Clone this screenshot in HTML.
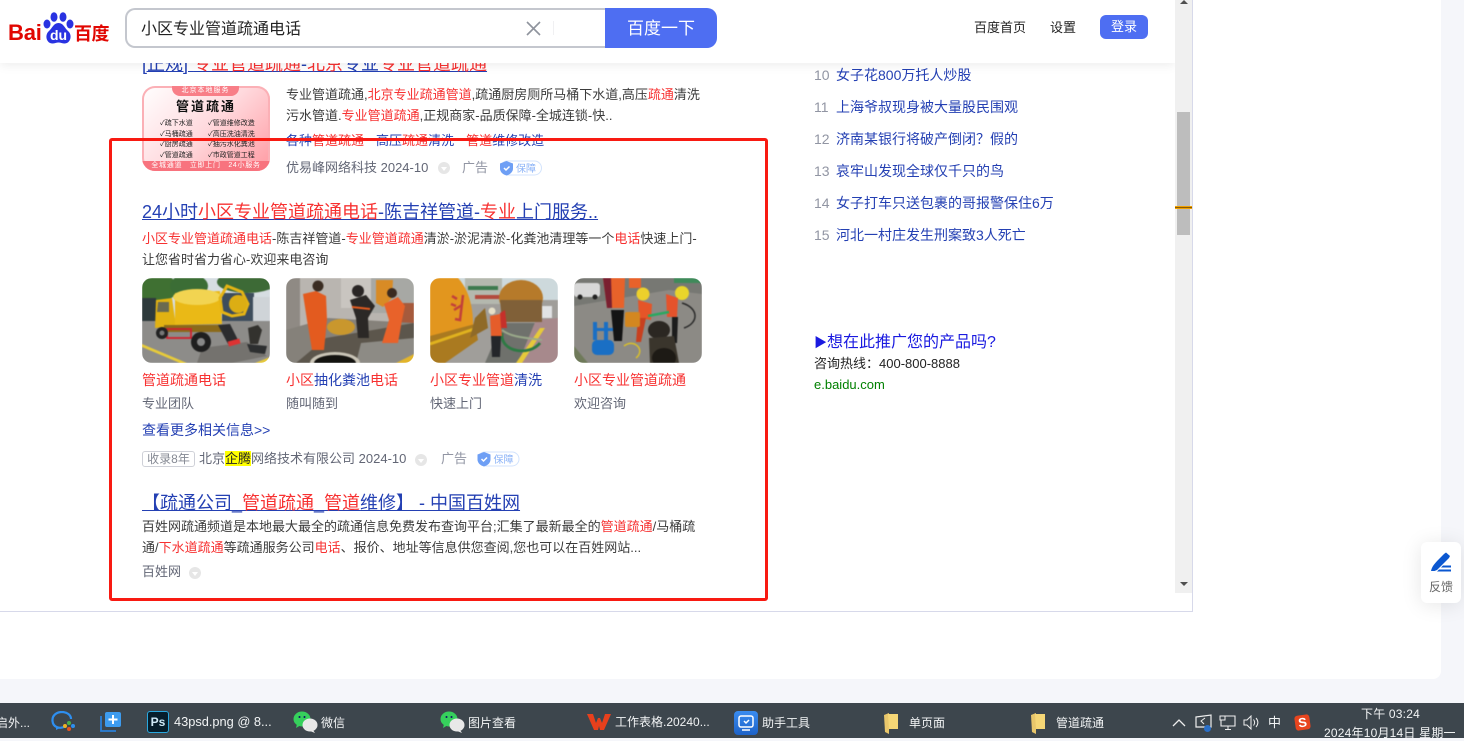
<!DOCTYPE html>
<html lang="zh"><head><meta charset="utf-8"><title>小区专业管道疏通电话</title>
<style>
html,body{margin:0;padding:0}
body{width:1464px;height:738px;overflow:hidden;position:relative;background:#f5f6fa;font-family:"Liberation Sans","Noto Sans CJK SC",sans-serif;color:#333}
.a{position:absolute}
.t{position:absolute;white-space:nowrap;line-height:20px}
.r{color:#f73131}
.b{color:#2440b3}
.d{font-size:13px;color:#3b3b3b}
.g{font-size:13px;color:#626675}
.u{text-decoration:underline}
.ti{font-size:18px;color:#2440b3;line-height:24px}
.tb{font-size:12px;color:#f2f4f5;line-height:16px;position:absolute;white-space:nowrap}
.ph{position:absolute;width:128px;height:85px;border-radius:10px;overflow:hidden;top:278px}
.ph svg{display:block;filter:blur(.45px)}
.sp{display:inline-block;width:12px}
</style></head><body>
<div class="a" style="left:0;top:0;width:1441px;height:679px;background:#fff;border-bottom-right-radius:8px"></div>

<!-- iframe content -->
<div class="a" style="left:0;top:0;width:1192px;height:611px;border-right:1px solid #d7d9ea;border-bottom:1px solid #d7d9ea;background:#fff;overflow:hidden">

<div class="t ti u" style="left:142px;top:52px"><span class="b">[正规]</span> <span class="r">专业管道疏通</span><span class="b">-</span><span class="r">北京</span><span class="b">专业</span><span class="r">专业管道疏通</span></div>

<!-- first ad thumb -->
<div class="a" style="left:142px;top:86px;width:128px;height:85px;border-radius:13px;overflow:hidden;background:linear-gradient(135deg,#fff 0%,#ffd9dd 50%,#ff9aa2 100%);box-shadow:inset 0 0 0 2px #fbb0b6">
 <div class="a" style="left:30px;top:0;width:67px;height:10px;background:#f87e87;border-radius:0 0 8px 8px;color:#fff;font-size:7px;line-height:9px;text-align:center;letter-spacing:1px;white-space:nowrap">北京本地服务</div>
 <div class="a" style="left:0;top:11px;width:128px;text-align:center;font-size:13px;line-height:20px;color:#111;letter-spacing:2px;font-weight:bold;white-space:nowrap">管道疏通</div>
 <div class="a" style="left:18px;top:33px;font-size:7px;line-height:10.700px;color:#222;white-space:nowrap">✓疏下水道<br>✓马桶疏通<br>✓厨房疏通<br>✓管道疏通</div>
 <div class="a" style="left:66px;top:33px;font-size:7px;line-height:10.700px;color:#222;white-space:nowrap">✓管道维修改造<br>✓高压洗油清洗<br>✓抽污水化粪池<br>✓市政管道工程</div>
 <div class="a" style="left:0;top:75px;width:128px;height:10px;background:#f8737e;color:#fff;font-size:7px;line-height:10px;text-align:center;white-space:nowrap;letter-spacing:.7px">全城通道　立即上门　24小服务</div>
</div>

<div class="t d" style="left:286px;top:85px">专业管道疏通,<span class="r">北京专业疏通管道</span>,疏通厨房厕所马桶下水道,高压<span class="r">疏通</span>清洗</div>
<div class="t d" style="left:286px;top:106px">污水管道.<span class="r">专业管道疏通</span>,正规商家-品质保障-全城连锁-快..</div>
<div class="t b" style="left:286px;top:131px;font-size:13px">各种<span class="r">管道疏通</span><span class="sp"></span>高压<span class="r">疏通</span>清洗<span class="sp"></span><span class="r">管道</span>维修改造</div>
<div class="t g" style="left:286px;top:158px">优易峰网络科技 2024-10</div>
<div class="a" style="left:438px;top:162px;width:12px;height:12px;border-radius:50%;background:#e6e6e6"><div class="a" style="left:3px;top:5px;border-left:3px solid transparent;border-right:3px solid transparent;border-top:4px solid #fff"></div></div>
<div class="t" style="left:462px;top:158px;font-size:13px;color:#9195a3">广告</div>
<svg class="a" style="left:500px;top:160px" width="42" height="16" viewBox="0 0 42 16"><rect x=".5" y="1" width="41" height="14" rx="7" fill="#fff" stroke="#d3e3fc"/><path d="M0 3.500 6.500 1l6.500 2.500v5C13 12 10 14.500 6.500 15.500 3 14.500 0 12 0 8.500z" fill="#6e9ff5"/><path d="M4 8l2 2 3.500-3.500" fill="none" stroke="#fff" stroke-width="1.500"/><text x="16" y="12" font-size="10" fill="#8ab2f7" font-family="Liberation Sans,Noto Sans CJK SC,sans-serif">保障</text></svg>

<!-- second result -->
<div class="t ti u" style="left:142px;top:200px"><span class="b">24小时</span><span class="r">小区专业管道疏通电话</span><span class="b">-陈吉祥管道-</span><span class="r">专业</span><span class="b">上门服务..</span></div>
<div class="t d" style="left:142px;top:229px"><span class="r">小区专业管道疏通电话</span>-陈吉祥管道-<span class="r">专业管道疏通</span>清淤-淤泥清淤-化粪池清理等一个<span class="r">电话</span>快速上门-</div>
<div class="t d" style="left:142px;top:250px">让您省时省力省心-欢迎来电咨询</div>

<div class="ph" style="left:142px"><svg width="128" height="85" viewBox="0 0 128 85">
<rect width="128" height="85" fill="#8f8f8c"/>
<rect width="128" height="44" fill="#d6dde2"/>
<ellipse cx="14" cy="10" rx="22" ry="14" fill="#3f7032"/><ellipse cx="47" cy="8" rx="19" ry="12" fill="#3b6d35"/><ellipse cx="105" cy="4" rx="30" ry="11" fill="#3d6a36"/>
<rect x="0" y="20" width="14" height="24" fill="#2e3a3c"/>
<rect x="80" y="15" width="32" height="32" fill="#3d4d5c"/><rect x="111" y="19" width="17" height="42" fill="#cfd4d8"/>
<rect y="43" width="128" height="42" fill="#8d8c89"/><path d="M0 66 45 85H38L0 69z" fill="#e7cb3a"/><path d="M60 70 105 64 125 78 90 85H55z" fill="#74726e"/>
<path d="M14 22 30 20 34 48 13 50z" fill="#e2b212"/><path d="M16 24H27V34H15z" fill="#6b6a50"/>
<path d="M33 15 78 13 80 46 33 47z" fill="#eab916"/><ellipse cx="55" cy="19" rx="24" ry="8" fill="#f2d451"/>
<path d="M78 20 85 8 100 14 106 26 102 36 90 38 80 34z" fill="none" stroke="#e5b414" stroke-width="3"/><circle cx="96" cy="26" r="9" fill="#dcae14"/>
<path d="M22 47H88V54H22z" fill="#8b6a1a"/><rect x="25" y="51" width="24" height="9" fill="none" stroke="#d0202e" stroke-width="1.800"/>
<circle cx="20" cy="55" r="6" fill="#222"/><circle cx="20" cy="55" r="2.500" fill="#777"/><circle cx="59" cy="64" r="10" fill="#1f1f1f"/><circle cx="59" cy="64" r="4" fill="#888"/>
<path d="M76 47 88 46 96 62 86 66z" fill="#2b2c2e"/><rect x="86" y="62" width="12" height="5" fill="#d33" transform="rotate(-15 92 64)"/>
<path d="M106 50 116 47 120 52 116 66H108z" fill="#33322e"/><path d="M105 66 125 68 123 76 108 74z" fill="#2d2f30"/>
<path d="M113 85 128 79V85z" fill="#e6c93c"/></svg></div>

<div class="ph" style="left:286px"><svg width="128" height="85" viewBox="0 0 128 85">
<rect width="128" height="85" fill="#a8a6a2"/>
<rect width="128" height="50" fill="#b9b5b0"/><path d="M0 0H14V50L0 55z" fill="#8f8a84"/><path d="M55 0 85 0 85 30 55 30z" fill="#c9c5c0"/><rect x="85" y="0" width="43" height="35" fill="#a7a8a4"/>
<path d="M90 2H107L106 20 97 29 90 25z" fill="#d88b25"/><rect x="112" y="25" width="16" height="20" fill="#a65a3c"/>
<path d="M0 52 42 40 128 45V85H0z" fill="#85817a"/><path d="M40 60 128 45V85H10z" fill="#5c564c"/><path d="M75 65 128 60V85H70z" fill="#8d8b85"/>
<ellipse cx="55" cy="49" rx="14" ry="8" fill="#c9972d"/>
<path d="M17 16 30 13 40 18 41 42 38 72H26L21 42z" fill="#e35b1f"/><circle cx="32" cy="8" r="5.500" fill="#3a2c22"/>
<path d="M64 22 80 17 89 28 82 40 83 60H72L70 40z" fill="#2b2826"/><circle cx="72" cy="13" r="6" fill="#2a2625"/><path d="M66 29 84 31" stroke="#e35b1f" stroke-width="2"/>
<path d="M98 26 112 19 119 28 116 42 112 65H96L103 42z" fill="#e8622a"/><circle cx="106" cy="15" r="5" fill="#3b2a20"/>
<ellipse cx="49" cy="85" rx="25" ry="11" fill="#c9c4b6"/><ellipse cx="49" cy="85" rx="21" ry="8" fill="#141310"/>
<path d="M110 85 128 76V85z" fill="#e3b52b"/></svg></div>

<div class="ph" style="left:430px"><svg width="128" height="85" viewBox="0 0 128 85">
<rect width="128" height="85" fill="#a09e9a"/>
<rect width="128" height="22" fill="#cdd9dc"/><rect x="35" y="0" width="37" height="26" fill="#b4b8ae"/><rect x="38" y="8" width="30" height="4" fill="#3d7a4e"/><rect x="45" y="17" width="25" height="4" fill="#b34a3e"/>
<path d="M72 45H106L88 85H55z" fill="#6f716c"/><path d="M106 42 128 40V85H88z" fill="#a7898c"/><path d="M110 50 115 50 92 85H86z" fill="#e6c93a"/>
<ellipse cx="91" cy="20" rx="22" ry="18" fill="#b67a2a"/><path d="M70 22H112V44H72z" fill="#806038"/><rect x="112" y="28" width="10" height="12" fill="#e0e2e4"/>
<path d="M0 0H28C42 15 45 40 42 62L0 72z" fill="#e2961e"/>
<path d="M22 18l5 3M21 26l5 2M33 17l-3 25-5-1M24 32l8-5" stroke="#c2403a" stroke-width="2.500" fill="none"/>
<path d="M0 58 45 46 48 62 15 85H0z" fill="#aa7a20"/><path d="M0 66 47 50" stroke="#e0b21e" stroke-width="3"/><path d="M45 40 55 30 58 50 40 60z" fill="#8f6a28"/>
<path d="M72 55C70 75 100 78 110 65" fill="none" stroke="#2d7a43" stroke-width="2.800"/><path d="M72 52C82 60 100 60 112 62" fill="none" stroke="#9aa98a" stroke-width="2"/>
<path d="M60 38 70 36 72 58H61z" fill="#e55d2a"/><path d="M61 58H71L70 79H62z" fill="#24262a"/><circle cx="62" cy="33" r="3.500" fill="#e6e0c8"/><path d="M70 35 75 32 77 50 71 50z" fill="#c6302a"/>
</svg></div>

<div class="ph" style="left:574px"><svg width="128" height="85" viewBox="0 0 128 85">
<rect width="128" height="85" fill="#8c8a85"/>
<path d="M0 0H128V16L95 12 0 28z" fill="#777873"/><rect x="100" y="0" width="28" height="5" fill="#3f8a5a"/>
<rect x="0" y="5" width="26" height="14" rx="3" fill="#d8d8d8"/><circle cx="6" cy="19" r="2.500" fill="#222"/><circle cx="21" cy="19" r="2.500" fill="#222"/>
<path d="M29 0H51L50 30H33z" fill="#e8622a"/><path d="M29 0H37L38 30H33z" fill="#7a1f30"/><path d="M37 32H50L48 63H40z" fill="#141414"/>
<rect x="55" y="0" width="12" height="10" fill="#e8622a"/>
<circle cx="69" cy="16" r="6.500" fill="#ecd02c"/><path d="M64 22 78 26 77 42 65 40z" fill="#e55528"/><path d="M64 40H72L67 64H62z" fill="#c8401f"/>
<circle cx="108" cy="15" r="7" fill="#e9d52b"/><path d="M92 16 104 20 103 39 93 39z" fill="#e5532c"/><path d="M98 39H104L103 65H98z" fill="#1c1c1c"/>
<path d="M74 38 95 34" stroke="#2aa860" stroke-width="2.500"/>
<rect x="19" y="44" width="4" height="18" fill="#1a6fc4"/><rect x="30" y="44" width="4" height="18" fill="#1a6fc4"/><rect x="20" y="50" width="19" height="3" fill="#1a6fc4"/><rect x="18" y="62" width="22" height="15" rx="5" fill="#1a6fc4"/>
<rect x="51" y="34" width="15" height="15" rx="2" fill="#d38720"/><path d="M50 68C60 60 72 72 62 80" fill="none" stroke="#d9bf2a" stroke-width="1.500"/>
<ellipse cx="85" cy="52" rx="11" ry="9" fill="#2b2722"/>
<path d="M75 60 100 58 105 85H76z" fill="#3a352c"/><ellipse cx="90" cy="80" rx="12" ry="10" fill="#1d1a15"/>
<path d="M108 25C125 30 125 45 110 50" fill="none" stroke="#2a2a2a" stroke-width="1.500"/>
<path d="M0 68 14 85H0z" fill="#6f7a5a"/></svg></div>

<div class="t" style="left:142px;top:370px;font-size:14px;color:#f73131">管道疏通电话</div>
<div class="t g" style="left:142px;top:394px">专业团队</div>
<div class="t" style="left:286px;top:370px;font-size:14px"><span class="r">小区</span><span class="b">抽化粪池</span><span class="r">电话</span></div>
<div class="t g" style="left:286px;top:394px">随叫随到</div>
<div class="t" style="left:430px;top:370px;font-size:14px"><span class="r">小区专业管道</span><span class="b">清洗</span></div>
<div class="t g" style="left:430px;top:394px">快速上门</div>
<div class="t" style="left:574px;top:370px;font-size:14px"><span class="r">小区专业管道疏通</span></div>
<div class="t g" style="left:574px;top:394px">欢迎咨询</div>

<div class="t b" style="left:142px;top:420px;font-size:14px">查看更多相关信息&gt;&gt;</div>

<div class="a" style="left:142px;top:451px;width:51px;height:14px;border:1px solid #cfd1d8;border-radius:3px;font-size:12px;line-height:14px;text-align:center;color:#858993;white-space:nowrap">收录8年</div>
<div class="t g" style="left:199px;top:449px">北京<span style="background:#ff0;color:#222">企腾</span>网络技术有限公司 2024-10</div>
<div class="a" style="left:415px;top:454px;width:12px;height:12px;border-radius:50%;background:#e6e6e6"><div class="a" style="left:3px;top:5px;border-left:3px solid transparent;border-right:3px solid transparent;border-top:4px solid #fff"></div></div>
<div class="t" style="left:441px;top:449px;font-size:13px;color:#9195a3">广告</div>
<svg class="a" style="left:477px;top:451px" width="43" height="16" viewBox="0 0 42 16"><rect x=".5" y="1" width="41" height="14" rx="7" fill="#fff" stroke="#d3e3fc"/><path d="M0 3.500 6.500 1l6.500 2.500v5C13 12 10 14.500 6.500 15.500 3 14.500 0 12 0 8.500z" fill="#6e9ff5"/><path d="M4 8l2 2 3.500-3.500" fill="none" stroke="#fff" stroke-width="1.500"/><text x="16" y="12" font-size="10" fill="#8ab2f7" font-family="Liberation Sans,Noto Sans CJK SC,sans-serif">保障</text></svg>

<div class="t ti u" style="left:142px;top:491px"><span class="b">【疏通公司_</span><span class="r">管道疏通</span><span class="b">_</span><span class="r">管道</span><span class="b">维修】 - 中国百姓网</span></div>
<div class="t d" style="left:142px;top:517px">百姓网疏通频道是本地最大最全的疏通信息免费发布查询平台;汇集了最新最全的<span class="r">管道疏通</span>/马桶疏</div>
<div class="t d" style="left:142px;top:538px">通/<span class="r">下水道疏通</span>等疏通服务公司<span class="r">电话</span>、报价、地址等信息供您查阅,您也可以在百姓网站...</div>
<div class="t g" style="left:142px;top:562px">百姓网</div>
<div class="a" style="left:189px;top:567px;width:12px;height:12px;border-radius:50%;background:#e6e6e6"><div class="a" style="left:3px;top:5px;border-left:3px solid transparent;border-right:3px solid transparent;border-top:4px solid #fff"></div></div>

<!-- red box -->
<div class="a" style="left:109px;top:138px;width:653px;height:457px;border:3px solid #f81a12;border-radius:3px"></div>

<!-- right col -->
<div class="t" style="left:814px;top:65px;font-size:14px;color:#9195a3">10</div><div class="t b" style="left:836px;top:65px;font-size:14px">女子花800万托人炒股</div>
<div class="t" style="left:814px;top:97px;font-size:14px;color:#9195a3">11</div><div class="t b" style="left:836px;top:97px;font-size:14px">上海爷叔现身被大量股民围观</div>
<div class="t" style="left:814px;top:129px;font-size:14px;color:#9195a3">12</div><div class="t b" style="left:836px;top:129px;font-size:14px">济南某银行将破产倒闭？假的</div>
<div class="t" style="left:814px;top:161px;font-size:14px;color:#9195a3">13</div><div class="t b" style="left:836px;top:161px;font-size:14px">哀牢山发现全球仅千只的鸟</div>
<div class="t" style="left:814px;top:193px;font-size:14px;color:#9195a3">14</div><div class="t b" style="left:836px;top:193px;font-size:14px">女子打车只送包裹的哥报警保住6万</div>
<div class="t" style="left:814px;top:225px;font-size:14px;color:#9195a3">15</div><div class="t b" style="left:836px;top:225px;font-size:14px">河北一村庄发生刑案致3人死亡</div>

<div class="t" style="left:814px;top:333px;font-size:16px;color:#1a1ae0"><span style="font-size:13px">▶</span>想在此推广您的产品吗?</div>
<div class="t" style="left:814px;top:354px;font-size:13px;color:#222">咨询热线：400-800-8888</div>
<div class="t" style="left:814px;top:375px;font-size:13px;color:#008000">e.baidu.com</div>

<!-- header -->
<div class="a" style="left:0;top:0;width:1175px;height:63px;background:#fff;box-shadow:0 2px 10px rgba(0,0,0,.08)"></div>
<div class="t" style="left:8px;top:19px;font-size:22px;line-height:28px;font-weight:bold;color:#e10601;letter-spacing:-.2px">Bai</div>
<svg class="a" style="left:43px;top:12px" width="31" height="33" viewBox="0 0 31 33"><ellipse cx="4" cy="12" rx="3.500" ry="4.500" fill="#2932e1"/><ellipse cx="11" cy="5" rx="3.500" ry="4.800" fill="#2932e1"/><ellipse cx="20" cy="5" rx="3.500" ry="4.800" fill="#2932e1"/><ellipse cx="27" cy="12" rx="3.500" ry="4.500" fill="#2932e1"/><path d="M15.500 11c5 0 6 5 10 8.500 4 4 2 12-4 12-2 0-4-1-6-1s-4 1-6 1c-6 0-8-8-4-12 4-3.500 5-8.500 10-8.500z" fill="#2932e1"/><text x="15.500" y="28" text-anchor="middle" font-size="14" font-weight="bold" fill="#fff" font-family="Liberation Sans,sans-serif">du</text></svg>
<div class="t" style="left:74px;top:22px;font-size:18px;line-height:24px;font-weight:bold;color:#e10601;letter-spacing:-.500px">百度</div>

<div class="a" style="left:125px;top:8px;width:478px;height:36px;border:2px solid #c4c7ce;border-right:0;border-radius:10px 0 0 10px;background:#fff;box-sizing:content-box"></div>
<div class="t" style="left:141px;top:20px;font-size:16px;color:#222">小区专业管道疏通电话</div>
<svg class="a" style="left:526px;top:21px" width="15" height="15" viewBox="0 0 15 15"><path d="M1 1 14 14M14 1 1 14" stroke="#8f939d" stroke-width="1.600" fill="none"/></svg>
<div class="a" style="left:553px;top:21px;width:1px;height:14px;background:#f0f0f2"></div>
<div class="a" style="left:605px;top:8px;width:112px;height:40px;background:#4e6ef2;border-radius:0 10px 10px 0;color:#fff;font-size:17px;line-height:41px;text-align:center">百度一下</div>
<div class="t" style="left:974px;top:18px;font-size:13px;color:#222">百度首页</div>
<div class="t" style="left:1050px;top:18px;font-size:13px;color:#222">设置</div>
<div class="a" style="left:1100px;top:15px;width:48px;height:24px;background:#4e6ef2;border-radius:6px;color:#fff;font-size:13px;line-height:24px;text-align:center">登录</div>

<!-- scrollbar -->
<div class="a" style="left:1175px;top:0;width:17px;height:593px;background:#f0f0f0"></div>
<div class="a" style="left:1177px;top:112px;width:13px;height:123px;background:#bdbdbd"></div>
<div class="a" style="left:1175px;top:206px;width:17px;height:3px;background:#8a5a00;border-top:1px solid #f0a000;border-bottom:1px solid #f0a000;box-sizing:border-box"></div>
<div class="a" style="left:1180px;top:0;border-left:4px solid transparent;border-right:4px solid transparent;border-bottom:4px solid #505050"></div>
<div class="a" style="left:1180px;top:582px;border-left:4px solid transparent;border-right:4px solid transparent;border-top:4px solid #505050"></div>
</div>

<!-- feedback -->
<div class="a" style="left:1421px;top:542px;width:40px;height:61px;background:#fff;border-radius:6px;box-shadow:0 2px 20px rgba(0,0,0,.1)">
<svg class="a" style="left:9px;top:10px" width="22" height="20" viewBox="0 0 22 20"><path d="M1 19C2 14 5 11 14 2L16 .5 20 4 19 6 11 14 7 18 4.500 19z" fill="#0b57d0"/><path d="M9 17.500H21V19.500H7z" fill="#0b57d0"/><path d="M13 13.500H21V15.500H11z" fill="#0b57d0"/></svg>
<div class="t" style="left:8px;top:35px;font-size:12px;color:#666">反馈</div>
</div>

<!-- taskbar -->
<div class="a" style="left:0;top:703px;width:1464px;height:35px;background:#3d464d">
<div class="tb" style="left:-4px;top:12px">启外...</div>
<svg class="a" style="left:51px;top:8px" width="25" height="22" viewBox="0 0 25 22"><path d="M13 16C8 18 2 16 1.500 10 1 4 6 1 11 1c5 0 9 3 9 7" fill="none" stroke="#2e8ff0" stroke-width="2.200"/><path d="M5 15v4l4-2z" fill="#2e8ff0"/><circle cx="18" cy="12" r="2" fill="#49b04c"/><circle cx="22" cy="15" r="2" fill="#2e8ff0"/><circle cx="18" cy="18" r="2" fill="#e8541e"/><circle cx="14" cy="15" r="2" fill="#f0b323"/></svg>
<svg class="a" style="left:100px;top:8px" width="22" height="21" viewBox="0 0 22 21"><path d="M1 5V20H16" fill="none" stroke="#2a7fd8" stroke-width="1.800"/><rect x="5" y="1" width="16" height="15" rx="2" fill="#3d9bee"/><path d="M13 4v9M8.500 8.500h9" stroke="#fff" stroke-width="2"/></svg>
<div class="a" style="left:147px;top:8px;width:20px;height:20px;background:#061e2c;border:1px solid #29a8df;border-radius:3px;color:#cfe9f7;font-size:12px;line-height:20px;text-align:center;font-weight:bold">Ps</div>
<div class="tb" style="left:174px;top:11px;font-size:12.800px">43psd.png @ 8...</div>
<svg class="a" style="left:293px;top:8px" width="25" height="22" viewBox="0 0 25 22"><ellipse cx="9" cy="8" rx="8.500" ry="7.500" fill="#36d05c"/><path d="M4 13 3 17 8 14z" fill="#36d05c"/><circle cx="6.500" cy="6" r="1" fill="#116"/><circle cx="11.500" cy="6" r="1" fill="#116"/><ellipse cx="17" cy="14" rx="7.500" ry="6.500" fill="#e8e8e8"/><path d="M20 19l2 3-5-2z" fill="#e8e8e8"/></svg>
<div class="tb" style="left:321px;top:12px">微信</div>
<svg class="a" style="left:440px;top:8px" width="25" height="22" viewBox="0 0 25 22"><ellipse cx="9" cy="8" rx="8.500" ry="7.500" fill="#36d05c"/><path d="M4 13 3 17 8 14z" fill="#36d05c"/><circle cx="6.500" cy="6" r="1" fill="#116"/><circle cx="11.500" cy="6" r="1" fill="#116"/><ellipse cx="17" cy="14" rx="7.500" ry="6.500" fill="#e8e8e8"/><path d="M20 19l2 3-5-2z" fill="#e8e8e8"/></svg>
<div class="tb" style="left:468px;top:12px">图片查看</div>
<svg class="a" style="left:587px;top:10px" width="24" height="17" viewBox="0 0 24 17"><path d="M0 1H6L9 10 11 5H13L15 10 18 1H24L17 17H13L12 13 11 17H7z" fill="#e8401c"/></svg>
<div class="tb" style="left:615px;top:11px">工作表格.20240...</div>
<div class="a" style="left:734px;top:8px;width:24px;height:24px;background:linear-gradient(#3a8cf0,#1d62c8);border-radius:4px"><svg width="24" height="24" viewBox="0 0 24 24"><rect x="5" y="5" width="14" height="11" rx="2" fill="none" stroke="#fff" stroke-width="1.500"/><path d="M8 19h8" stroke="#fff" stroke-width="1.500"/><path d="M10 10l2 2 3-3" stroke="#fff" stroke-width="1.500" fill="none"/></svg></div>
<div class="tb" style="left:762px;top:12px">助手工具</div>
<svg class="a" style="left:884px;top:10px" width="15" height="21" viewBox="0 0 15 21"><path d="M0 2 5 0V21L1 19z" fill="#e9c76b"/><path d="M4 1H14V16H5z" fill="#f6d776"/></svg>
<div class="tb" style="left:909px;top:12px">单页面</div>
<svg class="a" style="left:1031px;top:10px" width="15" height="21" viewBox="0 0 15 21"><path d="M0 2 5 0V21L1 19z" fill="#e9c76b"/><path d="M4 1H14V16H5z" fill="#f6d776"/></svg>
<div class="tb" style="left:1056px;top:12px">管道疏通</div>
<svg class="a" style="left:1172px;top:15px" width="14" height="9" viewBox="0 0 14 9"><path d="M1 8 7 2l6 6" fill="none" stroke="#eee" stroke-width="1.300"/></svg>
<svg class="a" style="left:1195px;top:11px" width="18" height="19" viewBox="0 0 18 19"><path d="M1 3 16 1V13H1z" fill="none" stroke="#eee" stroke-width="1.200"/><path d="M10 4 6 7 9 10" fill="none" stroke="#eee"/><circle cx="12.500" cy="14.500" r="3.500" fill="#2a6fc8"/></svg>
<svg class="a" style="left:1219px;top:12px" width="17" height="16" viewBox="0 0 17 16"><path d="M5 1H16V11H2V5" fill="none" stroke="#eee" stroke-width="1.100"/><rect x="1" y="1" width="5" height="4" fill="none" stroke="#eee"/><path d="M9 11v3M6 14.500h6" stroke="#eee"/></svg>
<svg class="a" style="left:1243px;top:12px" width="17" height="15" viewBox="0 0 17 15"><path d="M1 5H4L8 1V14L4 10H1z" fill="none" stroke="#eee"/><path d="M10.500 4.500c1.500 2 1.500 4 0 6M13 3c2.500 3 2.500 6 0 9" fill="none" stroke="#eee"/></svg>
<div class="tb" style="left:1268px;top:12px;font-size:13px">中</div>
<div class="a" style="left:1295px;top:12px;width:15px;height:15px;background:#e8451e;border-radius:3px;transform:rotate(-8deg);color:#fff;font-size:13px;line-height:15px;text-align:center;font-weight:bold">S</div>
<div class="tb" style="left:1361px;top:3px;letter-spacing:.2px">下午 03:24</div>
<div class="tb" style="left:1324px;top:22px;letter-spacing:.2px">2024年10月14日 星期一</div>
</div>
</body></html>
